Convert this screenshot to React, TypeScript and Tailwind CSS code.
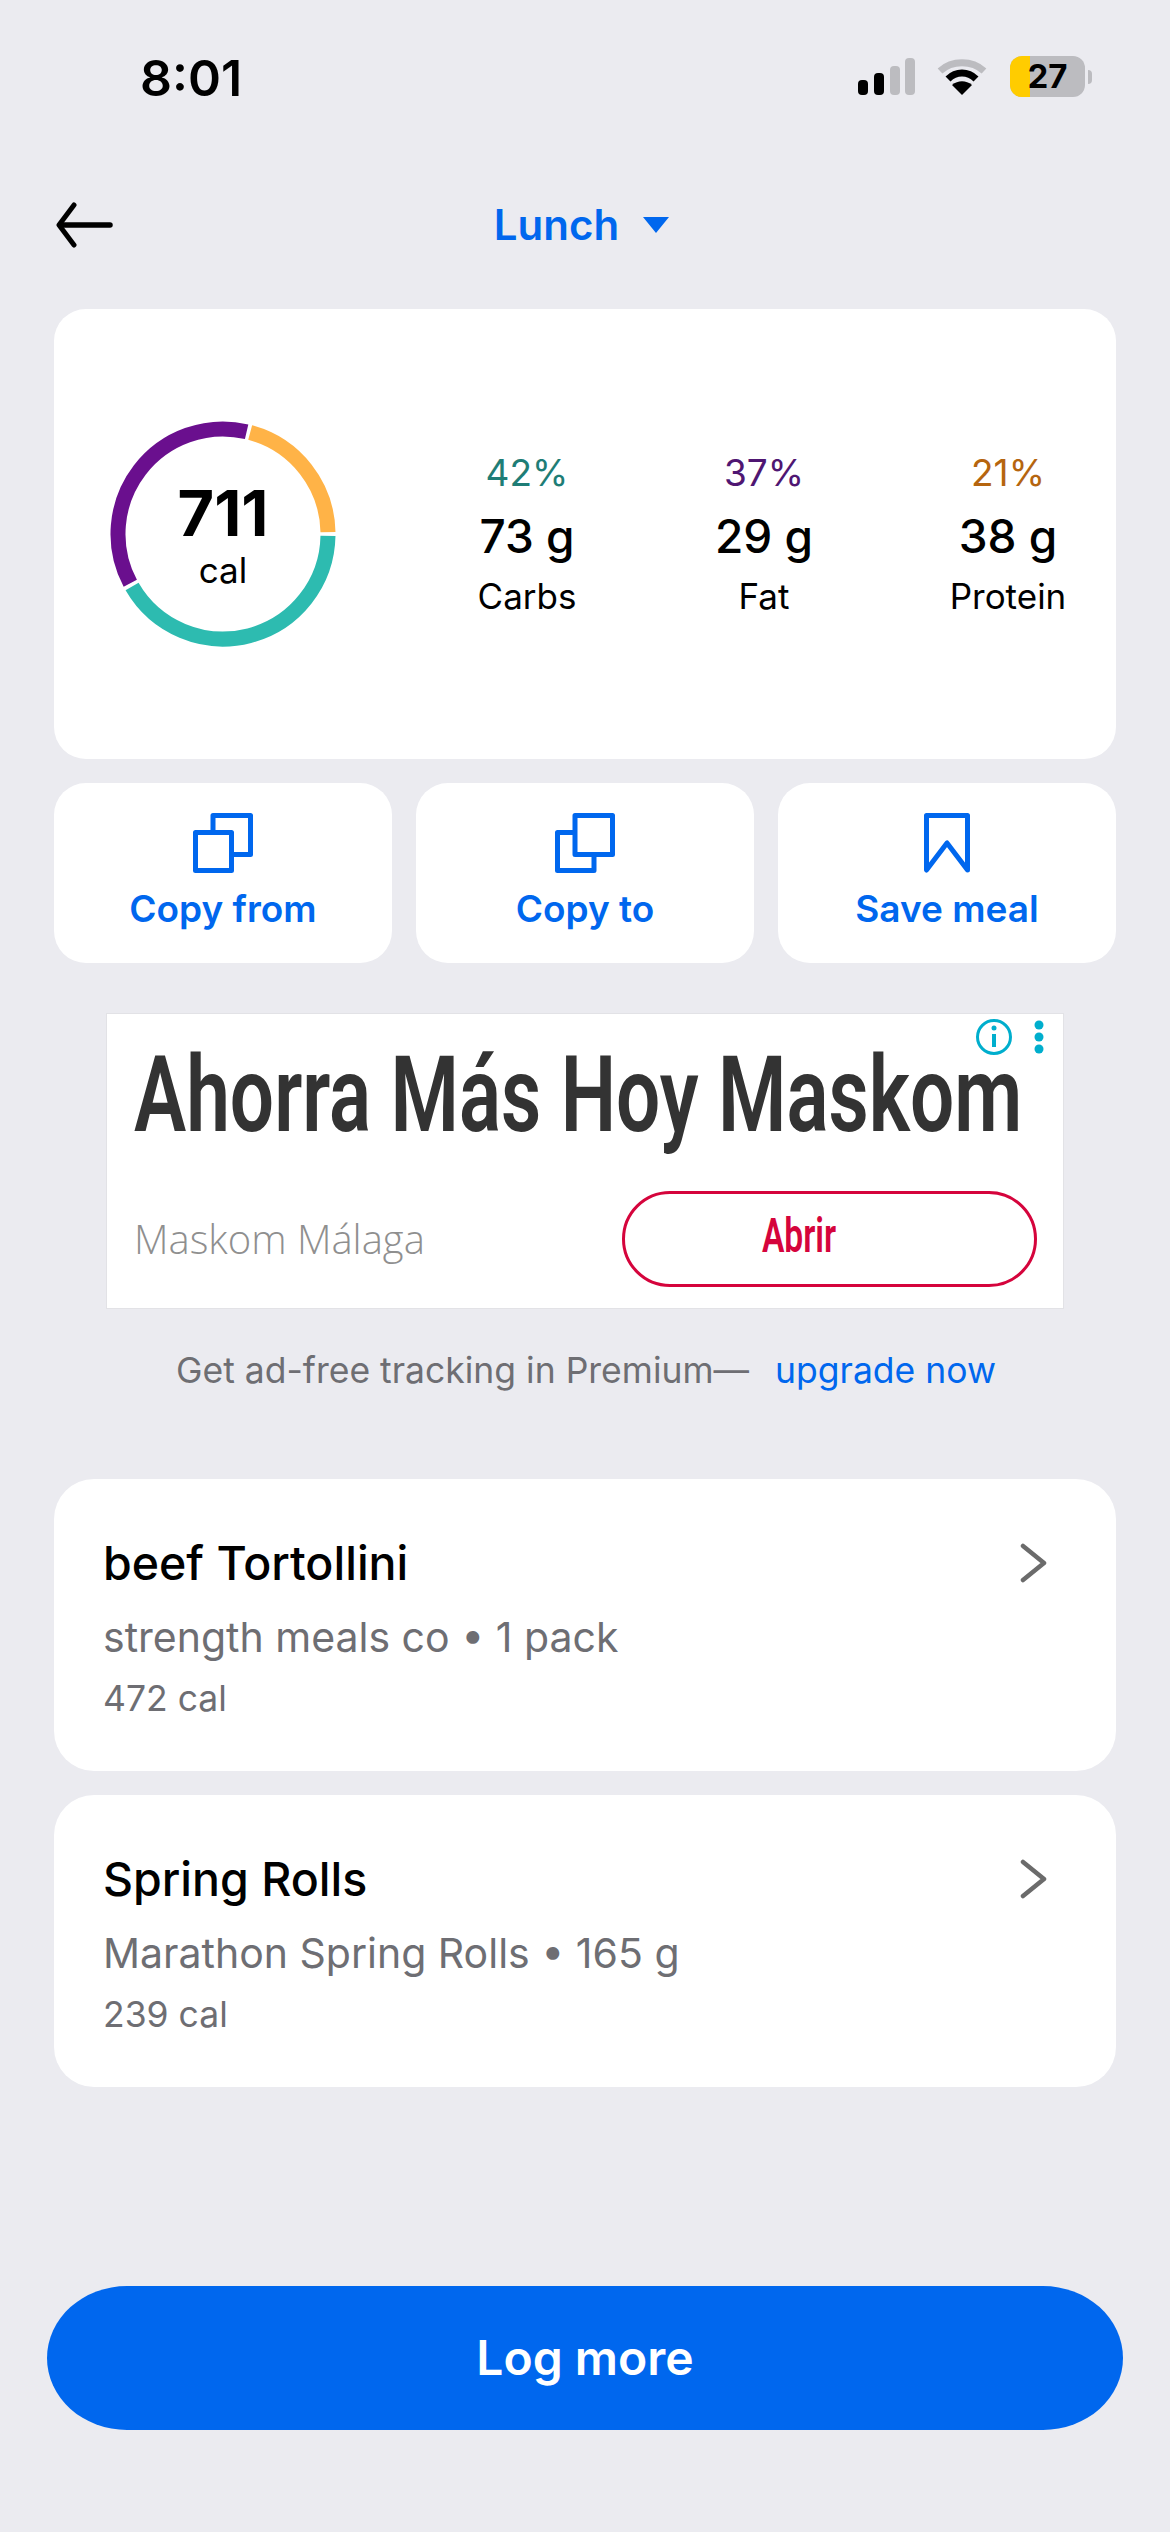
const sans = "font-['Inter','Liberation_Sans',sans-serif]";

function polar(deg: number, r: number) {
  const a = ((deg - 90) * Math.PI) / 180;
  return `${(115 + r * Math.cos(a)).toFixed(2)} ${(115 + r * Math.sin(a)).toFixed(2)}`;
}

function arc(from: number, to: number) {
  const r = 105;
  const large = to - from > 180 ? 1 : 0;
  return `M${polar(from, r)} A${r} ${r} 0 ${large} 1 ${polar(to, r)}`;
}

function Ring() {
  return (
    <div className="relative w-[230px] h-[230px] shrink-0">
      <svg width="230" height="230" viewBox="0 0 230 230" fill="none" strokeWidth="15">
        <path d={arc(91, 240)} stroke="#2dbbb0" />
        <path d={arc(242, 373)} stroke="#6a0f8e" />
        <path d={arc(375, 449)} stroke="#ffb347" />
      </svg>
      <div className="absolute inset-0 flex flex-col items-center">
        <span className="mt-[58px] text-[63px] leading-[72px] font-bold text-black">711</span>
        <span className="mt-[1px] text-[35px] leading-[40px] text-black">cal</span>
      </div>
    </div>
  );
}

function Stat({ pct, grams, label, color, className }: { pct: string; grams: string; label: string; color: string; className: string }) {
  return (
    <div className={`w-[200px] flex flex-col items-center ${className}`}>
      <span className={`text-[37px] leading-[44px] ${color}`}>{pct}</span>
      <span className="mt-[13px] text-[46px] leading-[56px] font-medium text-black">{grams}</span>
      <span className="mt-[10px] text-[35px] leading-[44px] text-black">{label}</span>
    </div>
  );
}

function ActionButton({ label, children }: { label: string; children: React.ReactNode }) {
  return (
    <div className="w-[338px] h-[180px] bg-white rounded-[32px] flex flex-col items-center pt-[30px]">
      {children}
      <span className="mt-[12px] text-[37px] leading-[48px] font-semibold text-[#0067ee]">{label}</span>
    </div>
  );
}

function CopyIcon({ front }: { front: "from" | "to" }) {
  return (
    <svg width="60" height="60" viewBox="0 0 60 60" fill="none" stroke="#0067ee" strokeWidth="5" strokeLinejoin="round">
      {front === "from" ? (
        <>
          <path d="M20 19.5V2.5H57.5V41.5H39" />
          <rect x="2.5" y="19.5" width="36" height="38" fill="white" />
        </>
      ) : (
        <>
          <path d="M20 19.5H2.5V57.5H39V41.5" />
          <rect x="20" y="2.5" width="37.5" height="39" fill="white" />
        </>
      )}
    </svg>
  );
}

function MealCard({ name, detail, cal }: { name: string; detail: string; cal: string }) {
  return (
    <div className="w-[1062px] h-[292px] bg-white rounded-[40px] pl-[49px] pr-[69px] pt-[54px] flex justify-between">
      <div className="flex flex-col">
        <span className="text-[46.5px] leading-[60px] font-medium text-black">{name}</span>
        <span className="mt-[20px] text-[41px] leading-[48px] text-[#6e6e73]">{detail}</span>
        <span className="mt-[16px] text-[35.5px] leading-[44px] text-[#6e6e73]">{cal}</span>
      </div>
      <svg className="mt-[10px]" width="27" height="40" viewBox="0 0 27 40" fill="none" stroke="#6b6b6b" strokeWidth="4.5" strokeLinecap="round" strokeLinejoin="round">
        <path d="M3 3L24 20L3 37" />
      </svg>
    </div>
  );
}

export default function App() {
  return (
    <main className={`w-[1170px] h-[2532px] bg-[#ebebf0] flex flex-col items-center overflow-hidden ${sans}`}>
      <header className="w-full h-[156px] pl-[140px] pr-[78px] flex justify-between items-start">
        <span className="mt-[48px] text-[50px] leading-[60px] font-semibold text-black">8:01</span>
        <div className="mt-[56px] flex items-center">
          <svg width="60" height="38" viewBox="0 0 60 38">
            <rect x="3" y="22" width="10" height="15" rx="4" fill="black" />
            <rect x="19" y="15" width="10" height="22" rx="4" fill="black" />
            <rect x="35" y="8" width="10" height="29" rx="4" fill="#bcbcc0" />
            <rect x="50" y="0" width="10" height="37" rx="4" fill="#bcbcc0" />
          </svg>
          <svg className="ml-[22px]" width="50" height="38" viewBox="0 0 50 38" fill="none">
            <path d="M3 13C15 2 35 2 47 13" stroke="#bcbcc0" strokeWidth="7" />
            <path d="M11 21C19 13 31 13 39 21" stroke="black" strokeWidth="7" />
            <path d="M25 37L15 27C21 22 29 22 35 27Z" fill="black" />
          </svg>
          <div className="relative ml-[23px] w-[75px] h-[41px] rounded-[12px] bg-[#bcbcc0] overflow-hidden flex items-center justify-center">
            <div className="absolute left-0 top-0 bottom-0 w-[20px] bg-[#ffcc00]" />
            <span className="relative text-[33px] leading-[41px] font-bold text-black">27</span>
          </div>
          <div className="ml-[3px] w-[4px] h-[14px] rounded-r-full bg-[#bcbcc0]" />
        </div>
      </header>

      <nav className="relative w-full h-[153px] flex justify-center items-start pt-[38px]">
        <svg className="absolute left-[56px] top-[46px]" width="58" height="46" viewBox="0 0 58 46" fill="none" stroke="black" strokeLinecap="round">
          <path d="M18 3L3 23L18 43" strokeWidth="5" strokeLinejoin="round" />
          <path d="M5 23H54" strokeWidth="5.5" />
        </svg>
        <div className="ml-[-7px] flex items-center">
          <span className="text-[42px] leading-[62px] font-semibold text-[#0067ee]">Lunch</span>
          <svg className="ml-[24px]" width="26" height="16" viewBox="0 0 26 16">
            <path d="M0 0H26L13 16Z" fill="#0067ee" />
          </svg>
        </div>
      </nav>

      <section className="w-[1062px] h-[450px] bg-white rounded-[32px] flex items-center pl-[54px]">
        <Ring />
        <div className="flex items-center">
          <Stat className="ml-[89px]" pct="42%" grams="73 g" label="Carbs" color="text-[#1e7d76]" />
          <Stat className="ml-[37px]" pct="37%" grams="29 g" label="Fat" color="text-[#4f1672]" />
          <Stat className="ml-[44px]" pct="21%" grams="38 g" label="Protein" color="text-[#b5650f]" />
        </div>
      </section>

      <section className="mt-[24px] w-[1062px] flex gap-[24px]">
        <ActionButton label="Copy from">
          <CopyIcon front="from" />
        </ActionButton>
        <ActionButton label="Copy to">
          <CopyIcon front="to" />
        </ActionButton>
        <ActionButton label="Save meal">
          <svg width="46" height="60" viewBox="0 0 46 60" fill="none" stroke="#0067ee" strokeWidth="5" strokeLinejoin="round">
            <path d="M2.5 57V2.5H43.5V57L23 30Z" />
          </svg>
        </ActionButton>
      </section>

      <section className="relative mt-[50px] w-[958px] h-[296px] bg-white border border-[#e2e2e6] pl-[27px] pr-[26px]">
        <svg className="absolute right-[50px] top-[4px]" width="38" height="38" viewBox="0 0 38 38" fill="none" stroke="#00aecd">
          <circle cx="19" cy="19" r="16.5" strokeWidth="3" />
          <path d="M19 16V29" strokeWidth="4" />
          <circle cx="19" cy="10" r="2.5" fill="#00aecd" stroke="none" />
        </svg>
        <svg className="absolute right-[18px] top-[6px]" width="12" height="34" viewBox="0 0 12 34" fill="#00aecd">
          <circle cx="6" cy="5" r="4.5" />
          <circle cx="6" cy="17" r="4.5" />
          <circle cx="6" cy="29" r="4.5" />
        </svg>
        <h2 className="mt-[20px] w-[880px] font-['Roboto',sans-serif] text-[105px] leading-[124px] font-semibold text-[#333333] whitespace-nowrap origin-left scale-x-[0.745]">
          Ahorra Más Hoy Maskom
        </h2>
        <div className="mt-[33px] flex items-center justify-between">
          <span className="font-['Open_Sans',sans-serif] font-light text-[40px] leading-[52px] text-[#8f8f8f]">Maskom Málaga</span>
          <div className="w-[415px] h-[96px] rounded-full border-[3px] border-[#d5043c] flex justify-center pr-[60px]">
            <span className="font-['Roboto',sans-serif] font-semibold text-[48px] leading-[84px] text-[#d5043c] scale-x-[0.7]">Abrir</span>
          </div>
        </div>
      </section>

      <p className="mt-[40px] w-full pl-[176px] flex text-[35.5px] leading-[44px]">
        <span className="text-[#6e6e73]">Get ad-free tracking in Premium—</span>
        <span className="ml-[26px] text-[#0067ee]">upgrade now</span>
      </p>

      <section className="mt-[86px] flex flex-col gap-[24px]">
        <MealCard name="beef Tortollini" detail="strength meals co • 1 pack" cal="472 cal" />
        <MealCard name="Spring Rolls" detail="Marathon Spring Rolls • 165 g" cal="239 cal" />
      </section>

      <button className="mt-[199px] w-[1076px] h-[144px] rounded-[80px/72px] bg-[#0067ee] flex items-center justify-center text-[48px] font-semibold text-white">
        Log more
      </button>
    </main>
  );
}
